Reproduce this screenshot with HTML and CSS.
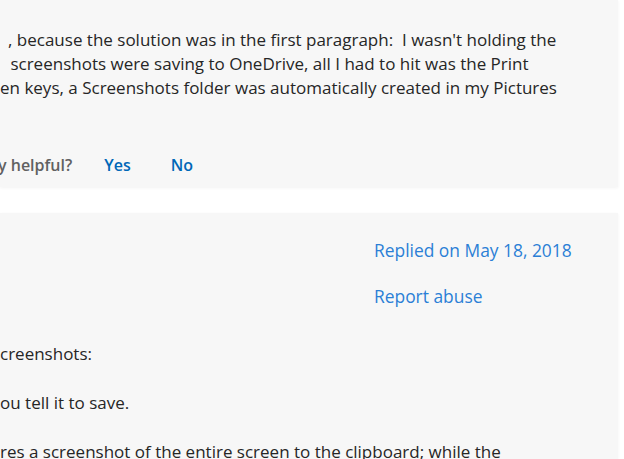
FILE: index.html
```html
<!DOCTYPE html>
<html lang="en">
<head>
<meta charset="utf-8">
<title>Reply thread</title>
<link rel="stylesheet" href="styles.css">
</head>
<body>
<div class="page">
  <section class="card card-top">
    <div class="body">
      <div class="line l1">, because the solution was in the first paragraph:&nbsp; I wasn't holding the</div>
      <div class="line l2">&nbsp;screenshots were saving to OneDrive, all I had to hit was the Print</div>
      <div class="line l3">en keys, a Screenshots folder was automatically created in my Pictures</div>
    </div>
    <div class="helpful">
      <span class="q">y helpful?</span>
      <a class="vote" href="#">Yes</a>
      <a class="vote" href="#">No</a>
    </div>
  </section>
  <section class="card card-bottom">
    <div class="meta-row">
      <div class="spacer"></div>
      <div class="meta">
        <a class="meta-link" href="#">Replied on May 18, 2018</a>
        <a class="meta-link" href="#">Report abuse</a>
      </div>
    </div>
    <div class="body body2">
      <p class="line">creenshots:</p>
      <p class="line">ou tell it to save.</p>
      <p class="line">res a screenshot of the entire screen to the clipboard; while the</p>
    </div>
  </section>
</div>
</body>
</html>
```
FILE: styles.css
```css
html, body {
  margin: 0;
  padding: 0;
  background: #ffffff;
  overflow: hidden;
}
body {
  width: 624px;
  height: 459px;
  font-family: "Open Sans", "Noto Sans", "Liberation Sans", sans-serif;
  font-size: 17px;
  color: #262626;
}
.page {
  display: flex;
  flex-direction: column;
  gap: 26px;
  height: 459px;
  padding-right: 6px;
}
.card {
  background: #f7f7f7;
  box-shadow: 0 1px 3px rgba(0, 0, 0, 0.05);
  overflow: hidden;
}
.card-top {
  height: 187px;
  flex: none;
  box-sizing: border-box;
  padding-top: 28px;
  display: flex;
  flex-direction: column;
}
.line {
  white-space: nowrap;
  line-height: 24px;
  margin: 0;
}
.l1 { padding-left: 8px; }
.l2 { padding-left: 6px; }
.l3 { padding-left: 0; }
.helpful {
  margin-top: 53px;
  display: flex;
  align-items: center;
  line-height: 24px;
  font-weight: 600;
  font-size: 16px;
}
.helpful .q {
  color: #616161;
  margin-left: -2px;
  margin-right: 32px;
}
.vote {
  color: #0067b8;
  text-decoration: none;
  margin-right: 40px;
}
.card-bottom {
  flex: 1;
  min-height: 0;
  box-sizing: border-box;
  padding-top: 25px;
}
.meta-row {
  display: grid;
  grid-template-columns: 1fr 244px;
}
.meta {
  display: flex;
  flex-direction: column;
  gap: 22px;
}
.meta-link {
  color: #2b7fd6;
  text-decoration: none;
  font-size: 17.4px;
  line-height: 24px;
}
.body2 {
  margin-top: 34px;
  display: flex;
  flex-direction: column;
  gap: 25px;
}
```
